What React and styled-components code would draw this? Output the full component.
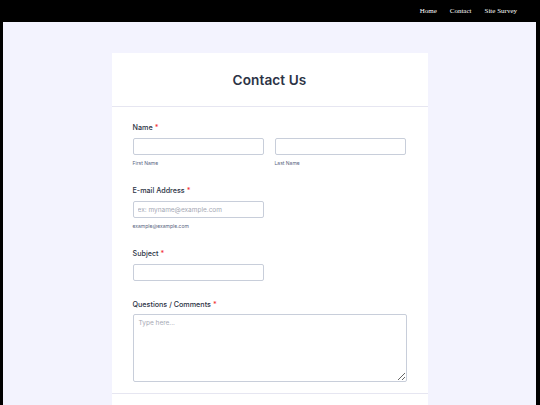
import React from "react";
import styled, { createGlobalStyle } from "styled-components";

const GlobalStyle = createGlobalStyle`
  html, body {
    margin: 0;
    padding: 0;
    background: #000;
    height: 100%;
    overflow: hidden;
  }
  #root {
    height: 100%;
  }
  * {
    box-sizing: border-box;
  }
`;

const Page = styled.div`
  display: flex;
  flex-direction: column;
  height: 405px;
  background: #000;
`;

const NavBar = styled.nav`
  height: 22px;
  display: flex;
  align-items: center;
  justify-content: flex-end;
  gap: 13px;
  padding: 0 23px 1px 0;
`;

const NavLink = styled.a`
  color: #fff;
  font-family: "Liberation Serif", "Times New Roman", serif;
  font-size: 7px;
  font-weight: 400;
  text-decoration: none;
`;

const Main = styled.main`
  flex: 1;
  margin: 0 4px 0 3px;
  background: #f3f3fe;
  display: flex;
  justify-content: center;
  padding-top: 31px;
  overflow: hidden;
`;

const Card = styled.div`
  width: 316px;
  background: #fff;
  font-family: Inter, "Noto Sans", sans-serif;
  color: #2c3345;
  align-self: flex-start;
`;

const CardHeader = styled.div`
  height: 54px;
  display: flex;
  align-items: center;
  justify-content: center;
  border-bottom: 1px solid #e6e6f1;
`;

const Title = styled.h1`
  margin: 0;
  font-size: 13.6px;
  font-weight: 600;
  letter-spacing: 0.1px;
  padding-top: 1px;
`;

const Body = styled.div`
  padding: 16px 21px 11px 21px;
  display: flex;
  flex-direction: column;
  gap: 20px;
  border-bottom: 1px solid #e6e6f1;
`;

const Field = styled.div`
  display: flex;
  flex-direction: column;
  margin-top: ${(p) => p.$pull || 0}px;
`;

const Label = styled.label`
  font-size: 7.2px;
  font-weight: 500;
  color: #2c3345;
  margin-bottom: ${(p) => p.$space || 6}px;
  line-height: 9px;
`;

const Star = styled.span`
  color: #f23a3c;
  margin-left: 2px;
`;

const Row = styled.div`
  display: flex;
  gap: 11px;
`;

const Column = styled.div`
  display: flex;
  flex-direction: column;
  width: 131px;
`;

const Input = styled.input`
  height: 17px;
  width: 100%;
  border: 1px solid #c8ceda;
  border-radius: 2px;
  padding: 0 4px;
  font-family: Inter, "Noto Sans", sans-serif;
  font-size: 6.5px;
  color: #2c3345;
  outline: none;
  &::placeholder {
    color: #a5a8b4;
  }
`;

const SubLabel = styled.span`
  font-size: 5px;
  color: #57647e;
  margin-top: 5px;
  line-height: 6px;
`;

const TextArea = styled.textarea`
  width: 274px;
  height: 68px;
  border: 1px solid #c8ceda;
  border-radius: 2px;
  padding: 4px 5px;
  font-family: Inter, "Noto Sans", sans-serif;
  font-size: 6.5px;
  color: #2c3345;
  outline: none;
  resize: both;
  &::placeholder {
    color: #a5a8b4;
  }
`;

const Footer = styled.div`
  height: 30px;
`;

export default function App() {
  return (
    <>
      <GlobalStyle />
      <Page>
        <NavBar>
          <NavLink href="#">Home</NavLink>
          <NavLink href="#">Contact</NavLink>
          <NavLink href="#">Site Survey</NavLink>
        </NavBar>
        <Main>
          <Card>
            <CardHeader>
              <Title>Contact Us</Title>
            </CardHeader>
            <Body>
              <Field>
                <Label>
                  Name<Star>*</Star>
                </Label>
                <Row>
                  <Column>
                    <Input type="text" />
                    <SubLabel>First Name</SubLabel>
                  </Column>
                  <Column>
                    <Input type="text" />
                    <SubLabel>Last Name</SubLabel>
                  </Column>
                </Row>
              </Field>
              <Field>
                <Label>
                  E-mail Address<Star>*</Star>
                </Label>
                <Column>
                  <Input type="email" placeholder="ex: myname@example.com" />
                  <SubLabel>example@example.com</SubLabel>
                </Column>
              </Field>
              <Field>
                <Label>
                  Subject<Star>*</Star>
                </Label>
                <Column>
                  <Input type="text" />
                </Column>
              </Field>
              <Field $pull={-1}>
                <Label $space={5}>
                  Questions / Comments<Star>*</Star>
                </Label>
                <TextArea placeholder="Type here..." />
              </Field>
            </Body>
            <Footer />
          </Card>
        </Main>
      </Page>
    </>
  );
}
